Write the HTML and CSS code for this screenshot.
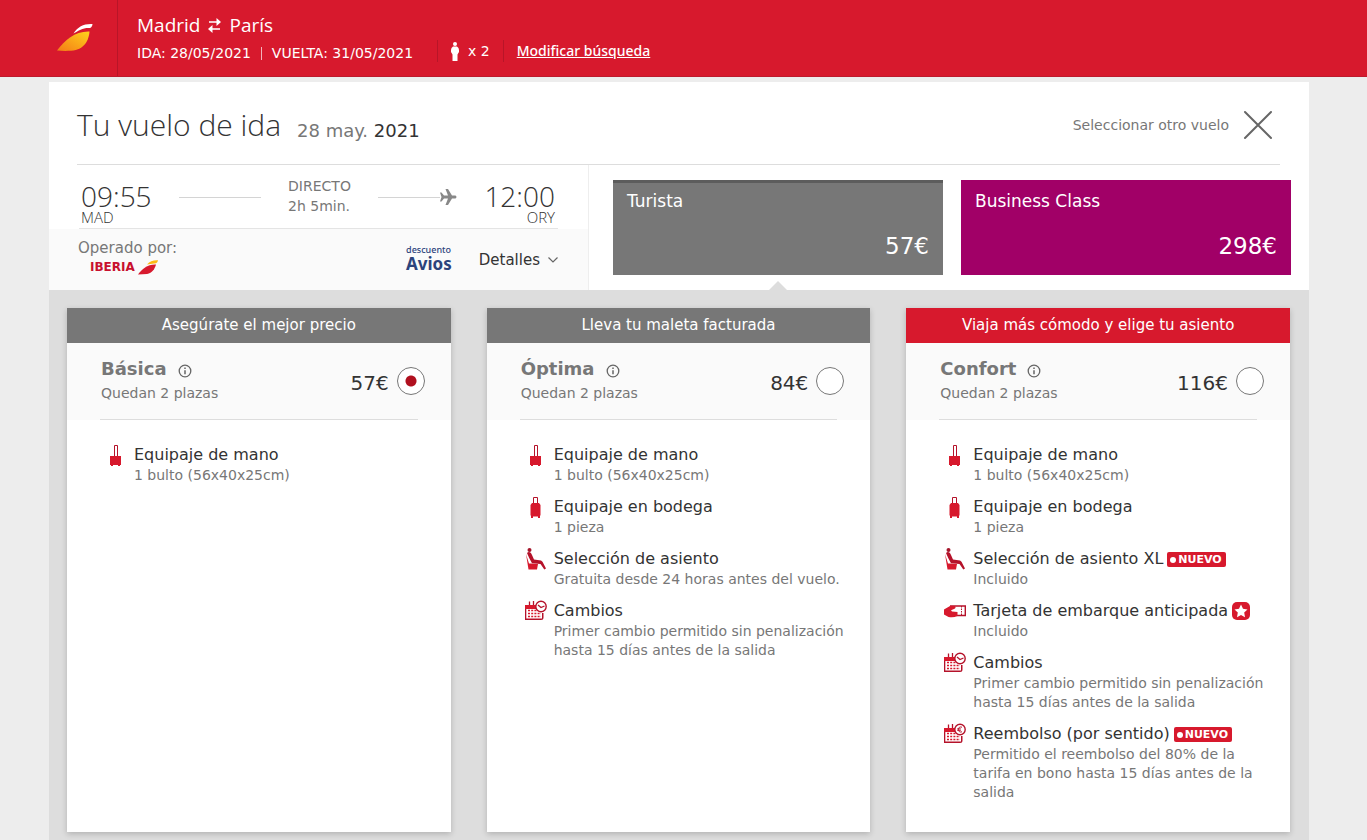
FILE: index.html
```html
<!DOCTYPE html>
<html lang="es">
<head>
<meta charset="utf-8">
<meta name="viewport" content="width=device-width, initial-scale=1">
<title>Iberia - Madrid París</title>
<link rel="stylesheet" href="styles.css">
</head>
<body>
<svg class="defs" aria-hidden="true">
  <symbol id="cabin" viewBox="0 0 22 22"><path d="M9.500 12V1.500h3V12" fill="none" stroke="#b5122a" stroke-width="1"/><path d="M5 12h11v9h-1v1h-2v-1H8v1H6v-1H5z" fill="#d7192d"/></symbol>
  <symbol id="hold" viewBox="0 0 22 22"><path d="M8.500 7V1.500h4V7" fill="none" stroke="#b5122a" stroke-width="1"/><path d="M7 7h7l1.500 2v10L15 20v2h-2v-1.500H8V22H6v-2l-.500-1V9z" fill="#d7192d"/></symbol>
  <symbol id="seat" viewBox="0 0 22 22"><circle cx="4.500" cy="2" r="2" fill="#a5142a"/><path d="M2 5c2-2 4-.5 5 2l2 4.500 7 1 1.500 1.300L21 20.500l-1.700 1L15.500 16 7 15.300 4.200 10z" fill="#b5122a"/><path d="M1 6l3 9.500h2l7 .5-1 5.500H3.500z" fill="#d7192d"/></symbol>
  <symbol id="calendar" viewBox="0 0 22 22"><path d="M0 5h13v4H1.300v9.500H17V13h1.500v4.500q0 2.500-2.500 2.500H0z" fill="#b5122a"/><path d="M4.500 1.500v4M8.500 1v4" stroke="#b5122a" stroke-width="1.300"/><path d="M3 10.500H12M3 13.500H16M3 16.500H16" stroke="#d7192d" stroke-width="1.500" stroke-dasharray="2 1.200" fill="none"/><path d="M0 5h11v4H0z" fill="#d7192d"/><circle cx="16" cy="6.500" r="5.200" fill="#fff" stroke="#b5122a" stroke-width="1.400"/></symbol>
  <symbol id="changes" viewBox="0 0 22 22"><use href="#calendar"/><path d="M13 5l3 2.500L19.500 6" stroke="#b5122a" stroke-width="1.300" fill="none"/></symbol>
  <symbol id="refund" viewBox="0 0 22 22"><use href="#calendar"/><path d="M18 4.200q-3.500-1-3.500 2.300T18 8.800M13.200 5.900h3.600M13.200 7.300h3.600" stroke="#b5122a" stroke-width="1" fill="none"/></symbol>
  <symbol id="boarding" viewBox="0 0 22 22"><path d="M6 6h15.300v9.500h-9" fill="#fff" stroke="#b5122a" stroke-width="1.400"/><path d="M17.500 6v9" stroke="#b5122a" stroke-dasharray="1.500 1"/><path d="M0 9.500L6 6h5q1.500 2-1 3l-3 1.300 1 1.200 5.500.5v4q-4 2-9 1L0 14.500z" fill="#d7192d"/></symbol>
  <symbol id="info" viewBox="0 0 14 14"><circle cx="7" cy="7" r="5.800" fill="none" stroke="#666" stroke-width="1.300"/><path d="M7 3.500v1.500M7 6.200v4" stroke="#666" stroke-width="1.500"/></symbol>
</svg>

<header class="topbar">
  <a class="brand" href="#" aria-label="Iberia">
    <svg width="36" height="28" viewBox="0 0 36 28">
      <defs><linearGradient id="wing" x1="0" y1="1" x2="1" y2="0"><stop offset="0" stop-color="#f47b16"/><stop offset="1" stop-color="#ffd21c"/></linearGradient></defs>
      <path d="M0 27.500C8 17 18 8 32.500 8.500 32 16 28 27 14 27.800 9 28 4 28 0 27.500z" fill="url(#wing)"/>
      <path d="M16.500 10.500C21 3.500 27 .500 35.500 1c-.2 2-1 3.500-2.500 4C26 4.500 22 7.500 16.500 10.500z" fill="#fff"/>
    </svg>
  </a>
  <div class="trip">
    <div class="route">Madrid
      <svg width="13" height="15" viewBox="0 0 13 15" role="img" aria-label="ida y vuelta"><path d="M1 4h9M12 11H3" stroke="#fff" stroke-width="1.600"/><path d="M8.500 0L13 4l-4.500 4zM4.500 7L0 11l4.500 4z" fill="#fff"/></svg>
      París</div>
    <div class="dates"><span>IDA: 28/05/2021</span><span>VUELTA: 31/05/2021</span></div>
  </div>
  <div class="people">
    <svg width="10" height="19" viewBox="0 0 10 19" role="img" aria-label="Pasajeros"><circle cx="5" cy="2" r="2" fill="#fff"/><path d="M3 4.500h4q2 1 2 3.500v2l-1.500 2.500V19h-5v-6.500L1 10V8q0-2.500 2-3.500z" fill="#fff"/></svg>
    <span>x 2</span>
  </div>
  <a class="modify" href="#">Modificar búsqueda</a>
</header>

<div class="page">
<main class="panel">
  <div class="heading">
    <h1>Tu vuelo de ida</h1>
    <p class="day">28 may. <b>2021</b></p>
    <button class="other" type="button">Seleccionar otro vuelo
      <svg width="30" height="30" viewBox="0 0 30 30" aria-hidden="true"><path d="M2 2l26 26M28 2L2 28" stroke="#666" stroke-width="2" stroke-linecap="round"/></svg>
    </button>
  </div>

  <div class="flight">
    <section class="leg">
      <div class="times">
        <div class="stop"><span class="hour">09:55</span><span class="port">MAD</span></div>
        <span class="line"></span>
        <div class="duration">DIRECTO<br>2h 5min.</div>
        <div class="arrive"><span class="line"></span>
          <svg width="17" height="18" viewBox="0 0 17 18" aria-hidden="true"><path d="M0 4.500h1.500L4 7.500h4L5.500 1H8l4 6.500h3.500q2 1.500 0 3H12L8 17H5.500L8 10.500H4l-2.500 3H0L1.500 9z" fill="#888"/></svg></div>
        <div class="stop end"><span class="hour">12:00</span><span class="port">ORY</span></div>
      </div>
      <div class="operator">
        <div class="carrier">Operado por:
          <span class="iberia">IBERIA<svg width="20" height="15" viewBox="0 0 20 15" aria-hidden="true"><path d="M0 14.500C4 9 10 4 18 4.500c-1 4-4 9-9 9.500z" fill="#d7192d"/><path d="M9 4.500C12 1 15 0 20 .200c-.5 2-1 2.500-2 3z" fill="#fdb913"/></svg></span>
        </div>
        <div class="avios"><small>descuento</small><strong>Avios</strong></div>
        <button class="details" type="button">Detalles
          <svg width="10" height="6" viewBox="0 0 10 6" aria-hidden="true"><path d="M.5.500L5 5 9.500.500" fill="none" stroke="#666" stroke-width="1.200"/></svg>
        </button>
      </div>
    </section>
    <div class="cabins">
      <button class="cabin selected" type="button"><span>Turista</span><span class="fare">57€</span></button>
      <button class="cabin business" type="button"><span>Business Class</span><span class="fare">298€</span></button>
    </div>
  </div>

  <div class="rates">
    <article class="rate">
      <div class="tag">Asegúrate el mejor precio</div>
      <div class="summary">
        <div><h2>Básica <svg class="info"><use href="#info"/></svg></h2><p>Quedan 2 plazas</p></div>
        <label class="pick"><span>57€</span> <input type="radio" name="rate" checked></label>
      </div>
      <ul>
        <li><svg><use href="#cabin"/></svg><div><h3>Equipaje de mano</h3><p>1 bulto (56x40x25cm)</p></div></li>
      </ul>
    </article>
    <article class="rate">
      <div class="tag">Lleva tu maleta facturada</div>
      <div class="summary">
        <div><h2>Óptima <svg class="info"><use href="#info"/></svg></h2><p>Quedan 2 plazas</p></div>
        <label class="pick"><span>84€</span> <input type="radio" name="rate"></label>
      </div>
      <ul>
        <li><svg><use href="#cabin"/></svg><div><h3>Equipaje de mano</h3><p>1 bulto (56x40x25cm)</p></div></li>
        <li><svg><use href="#hold"/></svg><div><h3>Equipaje en bodega</h3><p>1 pieza</p></div></li>
        <li><svg><use href="#seat"/></svg><div><h3>Selección de asiento</h3><p>Gratuita desde 24 horas antes del vuelo.</p></div></li>
        <li><svg><use href="#changes"/></svg><div><h3>Cambios</h3><p>Primer cambio permitido sin penalización hasta 15 días antes de la salida</p></div></li>
      </ul>
    </article>
    <article class="rate best">
      <div class="tag">Viaja más cómodo y elige tu asiento</div>
      <div class="summary">
        <div><h2>Confort <svg class="info"><use href="#info"/></svg></h2><p>Quedan 2 plazas</p></div>
        <label class="pick"><span>116€</span> <input type="radio" name="rate"></label>
      </div>
      <ul>
        <li><svg><use href="#cabin"/></svg><div><h3>Equipaje de mano</h3><p>1 bulto (56x40x25cm)</p></div></li>
        <li><svg><use href="#hold"/></svg><div><h3>Equipaje en bodega</h3><p>1 pieza</p></div></li>
        <li><svg><use href="#seat"/></svg><div><h3>Selección de asiento XL <span class="new">NUEVO</span></h3><p>Incluido</p></div></li>
        <li><svg><use href="#boarding"/></svg><div><h3>Tarjeta de embarque anticipada <svg class="star" viewBox="0 0 18 18" aria-hidden="true"><rect width="18" height="18" rx="5" fill="#d7192d"/><path d="M9 2.500l2 4.300 4.500.6-3.300 3.200.8 4.700-4-2.300-4 2.300.8-4.700L2.500 7.400 7 6.800z" fill="#fff"/></svg></h3><p>Incluido</p></div></li>
        <li><svg><use href="#changes"/></svg><div><h3>Cambios</h3><p>Primer cambio permitido sin penalización hasta 15 días antes de la salida</p></div></li>
        <li><svg><use href="#refund"/></svg><div><h3>Reembolso (por sentido) <span class="new">NUEVO</span></h3><p>Permitido el reembolso del 80% de la tarifa en bono hasta 15 días antes de la salida</p></div></li>
      </ul>
    </article>
  </div>
</main>
</div>
</body>
</html>
```

FILE: styles.css
```css
* { box-sizing: border-box; }
body { margin: 0; background: #ededed; color: #333; font-family: "DejaVu Sans", Verdana, sans-serif; font-size: 14px; }
h1, h2, h3, p, ul { margin: 0; padding: 0; font-weight: 400; }
button { border: 0; background: none; padding: 0; margin: 0; font: inherit; color: inherit; cursor: pointer; }
svg { display: block; flex: none; }
.defs { display: none; }

.topbar { display: flex; height: 77px; background: #d7192d; color: #fff; border-bottom: 1px solid #bd1a2d; }
.brand { width: 118px; padding: 23px 0 0 57px; border-right: 1px solid #b81528; }
.trip { padding: 12px 24px 0 19px; }
.route { display: flex; align-items: center; gap: 8px; font: 400 19px/26px "Open Sans", "Noto Sans", sans-serif; }
.dates { display: flex; align-items: center; margin-top: 6px; line-height: 18px; }
.dates span + span { margin-left: 10px; padding-left: 10px; border-left: 1px solid #f2b3ba; line-height: 13px; }
.people { display: flex; align-items: center; gap: 8px; align-self: flex-start; margin-top: 40px; height: 22px; padding: 0 13px 0 12px; border: solid #b81528; border-width: 0 1px; }
.modify { margin: 42px 0 0 13px; color: #fff; font: 500 14px/18px "Noto Sans", sans-serif; }

.page { padding: 5px 9px 0 0; }
.panel { max-width: 1260px; margin: 0 auto; background: #fff; }
.heading { display: flex; align-items: center; height: 83px; margin: 0 29px 0 28px; border-bottom: 1px solid #ddd; padding-top: 3px; }
h1 { font: 300 30px/40px "Open Sans", "Noto Sans", sans-serif; }
.day { margin: 11px 0 0 16px; font-size: 18px; color: #777; }
.day b { font-weight: 400; color: #333; }
.other { display: flex; align-items: center; gap: 14px; margin-left: auto; padding-right: 7px; color: #777; }

.flight { display: flex; min-height: 125px; }
.leg { width: 540px; border-right: 1px solid #eee; }
.times { display: flex; align-items: flex-start; justify-content: space-between; height: 64px; margin: 0 30px; border-bottom: 1px solid #e4e4e4; padding: 16px 3px 0 2px; }
.stop { display: flex; flex-direction: column; font-family: "Open Sans", "Noto Sans", sans-serif; font-weight: 300; }
.stop.end { align-items: flex-end; }
.hour { font-size: 28px; line-height: 30px; }
.port { font-size: 15px; line-height: 12px; }
.line { width: 82px; height: 1px; background: #d4d4d4; margin-top: 16px; }
.duration { margin-top: -5px; color: #777; line-height: 20px; }
.arrive { display: flex; }
.arrive .line { width: 62px; }
.arrive svg { margin-top: 7px; }
.operator { display: flex; align-items: flex-start; height: 61px; padding: 8px 30px 0 29px; background: #fafafa; color: #777; }
.carrier { line-height: 22px; font-size: 15px; }
.iberia { display: flex; align-items: center; gap: 3px; padding-left: 12px; color: #c8102e; font-size: 12px; font-weight: 700; line-height: 16px; }
.avios { display: flex; flex-direction: column; margin: 7px 27px 0 auto; color: #2c437c; font-family: "Noto Sans", "Open Sans", sans-serif; }
.avios small { font-size: 9px; line-height: 12px; font-weight: 500; }
.avios strong { font-size: 17px; line-height: 16px; }
.details { display: flex; align-items: center; gap: 8px; margin-top: 14px; color: #333; font-size: 15px; }
.cabins { flex: 1; display: grid; grid-template-columns: 1fr 1fr; gap: 18px; padding: 15px 18px 15px 24px; }
.cabin { position: relative; display: flex; flex-direction: column; justify-content: space-between; padding: 12px 14px 15px; background: #777; color: #fff; font-size: 17px; line-height: 18px; text-align: left; }
.selected { border-top: 3px solid #5c5c5c; padding-top: 9px; }
.business { background: #a10067; }
.fare { align-self: flex-end; font-size: 23px; line-height: 28px; }
.selected::after { content: ""; position: absolute; top: 100%; left: 50%; margin: 6px 0 0 -9px; border: 9px solid transparent; border-top: 0; border-bottom-color: #ddd; }

.rates { display: grid; grid-template-columns: repeat(3, 1fr); gap: 36px; padding: 18px 19px 8px 18px; background: #ddd; }
.rate { min-height: 524px; background: #fff; box-shadow: 0 2px 6px #0003; }
.tag { background: #777; color: #fff; font-size: 15px; line-height: 35px; text-align: center; }
.best .tag { background: #d7192d; }
.summary { display: flex; justify-content: space-between; height: 77px; padding: 14px 26px 0 34px; background: linear-gradient(#ddd, #ddd) 33px 100% / calc(100% - 66px) 1px no-repeat #fafafa; color: #777; }
h2 { display: flex; align-items: center; gap: 11px; font-size: 18px; line-height: 24px; font-weight: 700; }
.info { width: 14px; height: 14px; margin-top: 3px; }
.summary p { line-height: 24px; }
.pick { display: flex; align-items: center; gap: 8px; align-self: flex-start; height: 48px; color: #333; font-size: 20px; }
.pick span { padding-top: 4px; }
.pick input { appearance: none; width: 28px; height: 28px; margin: 0; border: 1px solid #777; border-radius: 50%; background: #fff; }
.pick input:checked { background: radial-gradient(circle, #b0101f 5px, #fff 6px); }
ul { display: grid; gap: 11px; padding: 24px 16px 20px 38px; list-style: none; }
li { display: grid; grid-template-columns: 22px 1fr; gap: 7px; }
li > svg { width: 22px; height: 22px; }
h3 { display: flex; align-items: center; gap: 4px; font-size: 16px; line-height: 22px; white-space: nowrap; }
li p { color: #777; line-height: 19px; }
.new { display: flex; align-items: center; gap: 2px; height: 15px; padding: 1px 4px 0 3px; border-radius: 2px; background: #d7192d; color: #fff; font-size: 11px; font-weight: 700; }
.new::before { content: ""; width: 6px; height: 6px; border-radius: 50%; background: #fff; }
.star { width: 18px; height: 18px; }
```
